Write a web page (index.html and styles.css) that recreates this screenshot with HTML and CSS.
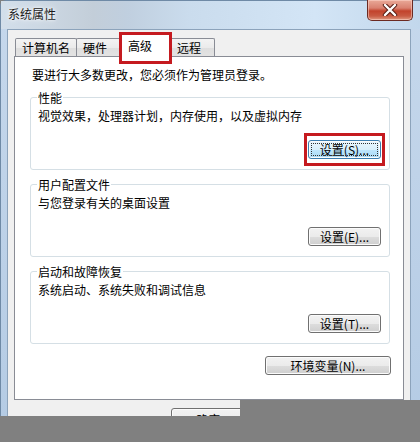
FILE: index.html
```html
<!DOCTYPE html>
<html lang="zh-CN">
  <head>
    <meta charset="UTF-8" />
    <meta name="viewport" content="width=device-width, initial-scale=1.0" />
    <title>系统属性</title>
    <link rel="stylesheet" href="styles.css">
  </head>
  <body>
    <div class="window">
      <div class="title-bar">
        <span class="title">系统属性</span>
        <div class="close">
          <svg width="16" height="12" viewBox="0 0 16 12">
            <path d="M3 1 L13 11 M13 1 L3 11" stroke="#5a2018" stroke-width="4.4" stroke-linecap="round" />
            <path d="M3 1 L13 11 M13 1 L3 11" stroke="#ffffff" stroke-width="2.4" stroke-linecap="round" />
          </svg>
        </div>
      </div>
      <div class="frame">
        <div class="client">
          <div class="tabs">
            <div class="tab">计算机名</div>
            <div class="tab">硬件</div>
            <div class="tab active marked">高级</div>
            <div class="tab">远程</div>
          </div>
          <div class="panel">
            <p class="intro">要进行大多数更改，您必须作为管理员登录。</p>
            <div class="group">
              <div class="group-title">性能</div>
              <p class="desc">视觉效果，处理器计划，内存使用，以及虚拟内存</p>
              <div class="actions">
                <button class="btn focused marked">设置(S)...</button>
              </div>
            </div>
            <div class="group">
              <div class="group-title">用户配置文件</div>
              <p class="desc">与您登录有关的桌面设置</p>
              <div class="actions">
                <button class="btn">设置(E)...</button>
              </div>
            </div>
            <div class="group">
              <div class="group-title">启动和故障恢复</div>
              <p class="desc">系统启动、系统失败和调试信息</p>
              <div class="actions">
                <button class="btn">设置(T)...</button>
              </div>
            </div>
            <div class="actions env">
              <button class="btn wide">环境变量(N)...</button>
            </div>
          </div>
          <div class="footer">
            <button class="btn big">确定</button>
            <button class="btn big">取消</button>
            <button class="btn big">应用(A)</button>
          </div>
        </div>
      </div>
    </div>
    <div class="shade shade-left"></div>
    <div class="shade shade-right"></div>
  </body>
</html>
```

FILE: styles.css
```css
* {
  margin: 0;
  padding: 0;
  box-sizing: border-box;
}
body {
  width: 420px;
  height: 442px;
  position: relative;
  overflow: hidden;
  background-color: #808080;
  font-family: "Noto Sans CJK SC", "Noto Sans", sans-serif;
  font-size: 12px;
  color: #000;
}
.window {
  height: 442px;
  display: flex;
  flex-direction: column;
  background: linear-gradient(180deg, #c6d8ec 0%, #b4cbe4 100%);
  border-top-left-radius: 6px;
  border-left: 1px solid #6f8aa6;
  border-top: 1px solid #6f8aa6;
}
.title-bar {
  height: 28px;
  display: flex;
  align-items: flex-start;
  background: linear-gradient(90deg, #d3dfeb 0%, #c3ced9 22%, #c0cfdf 30%, #cadced 45%, #d3e5f6 75%, #c2d7ec 100%);
}
.title {
  padding: 5px 0 0 7px;
  line-height: 16px;
  font-size: 12px;
  color: #1b1b1b;
  text-shadow: 0 0 6px #ffffff, 0 0 3px #ffffff;
}
.close {
  margin-left: auto;
  margin-right: 7px;
  margin-top: -1px;
  width: 46px;
  height: 21px;
  display: flex;
  justify-content: center;
  align-items: center;
  border: 1px solid #6b2a22;
  border-top: none;
  border-radius: 0 0 5px 5px;
  background: linear-gradient(180deg, #e9a998 0%, #d98170 40%, #c2432c 55%, #c85a42 80%, #e09a82 100%);
  box-shadow: inset 0 0 0 1px rgba(255, 220, 210, 0.5);
}
.frame {
  flex: 1;
  display: flex;
  padding: 0 9px 0 6px;
}
.client {
  flex: 1;
  display: flex;
  flex-direction: column;
  background-color: #f0f0f0;
  border: 1px solid #8ca3bb;
  border-bottom: none;
  padding: 8px 6px 0 6px;
}
.tabs {
  display: flex;
  align-items: flex-end;
  height: 18px;
  margin-left: 1px;
}
.tab {
  height: 18px;
  min-width: 45px;
  padding: 0 6px;
  line-height: 17px;
  border: 1px solid #898c95;
  border-bottom: none;
  border-radius: 2px 2px 0 0;
  background: linear-gradient(180deg, #f3f3f3 0%, #ebebeb 50%, #dedede 51%, #e3e3e3 100%);
  margin-right: -1px;
}
.tab.active {
  position: relative;
  z-index: 1;
  height: 23px;
  min-width: 53px;
  margin: 0 -2px -1px -1px;
  padding: 2px 8px 0 8px;
  background: #ffffff;
}
.marked {
  position: relative;
}
.marked::after {
  content: "";
  position: absolute;
  border: 3px solid #c51a1f;
  pointer-events: none;
}
.tab.marked::after {
  top: -3px;
  left: -1px;
  right: -1px;
  bottom: -7px;
}
.btn.marked::after {
  top: -8px;
  left: -5px;
  right: -5px;
  bottom: -8px;
}
.panel {
  height: 344px;
  background-color: #ffffff;
  border: 1px solid #898c95;
  padding: 10px 13px 0 15px;
}
.intro {
  margin-left: 2px;
  line-height: 16px;
}
.group {
  margin-top: 14px;
  border: 1px solid #d5dfe5;
  border-radius: 3px;
  padding: 0 8px 10px 7px;
}
.group-title {
  width: fit-content;
  margin-top: -7px;
  margin-left: -1px;
  padding: 0 1px;
  line-height: 14px;
  background-color: #ffffff;
}
.desc {
  margin-top: 3px;
  line-height: 16px;
}
.actions {
  display: flex;
  justify-content: flex-end;
  margin-top: 16px;
}
.actions.env {
  margin-top: 12px;
  margin-right: -1px;
}
.btn {
  font: inherit;
  font-size: 12px;
  color: #000;
  width: 73px;
  height: 19px;
  line-height: 16px;
  border: 1px solid #707070;
  border-radius: 3px;
  background: linear-gradient(180deg, #f2f2f2 0%, #ebebeb 50%, #dddddd 51%, #cfcfcf 100%);
  box-shadow: inset 0 0 0 1px #fbfbfb;
}
.btn.focused {
  border-color: #3c7fb1;
  background: linear-gradient(180deg, #eaf6fd 0%, #d9f0fc 50%, #bee6fd 51%, #a7d9f5 100%);
  outline: 1px dotted #333;
  outline-offset: -4px;
}
.btn.wide {
  width: 126px;
}
.footer {
  display: flex;
  justify-content: flex-end;
  gap: 4px;
  padding: 8px 0 0 0;
}
.btn.big {
  width: 75px;
  height: 23px;
}
.shade {
  position: absolute;
  background-color: #808080;
}
.shade-left {
  left: 0;
  top: 416px;
  width: 240px;
  height: 26px;
}
.shade-right {
  left: 240px;
  top: 400px;
  width: 180px;
  height: 42px;
}
```
